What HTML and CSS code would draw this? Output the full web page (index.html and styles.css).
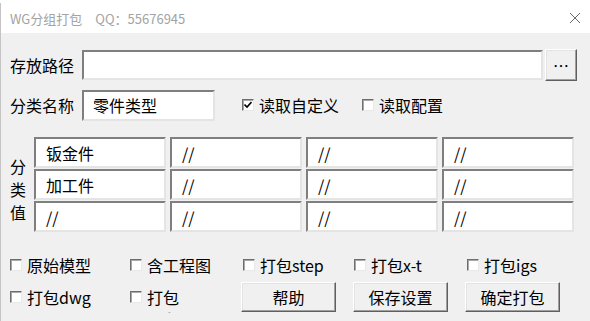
FILE: index.html
```html
<!DOCTYPE html>
<html lang="zh-CN">
<head>
    <meta charset="UTF-8">
    <title>WG分组打包</title>
    <link rel="stylesheet" href="styles.css">
</head>
<body>
    <div class="backdrop">
        <svg width="590" height="3" viewBox="0 0 590 3">
            <rect x="120" y="0" width="470" height="3" fill="#6f6f7b"/>
            <circle cx="413" cy="-3" r="7" fill="#2f8f86"/>
            <path d="M452 0 L458 3" stroke="#222" stroke-width="1"/>
            <rect x="585" y="0" width="1" height="3" fill="#d8d8d8"/>
        </svg>
    </div>

    <div class="window">
        <div class="titlebar">
            <span class="title">WG分组打包</span>
            <span class="qq">QQ：55676945</span>
            <span class="close">
                <svg width="12" height="12" viewBox="0 0 12 12">
                    <path d="M1 1 L11 11 M11 1 L1 11" stroke="#6a6a6a" stroke-width="1"/>
                </svg>
            </span>
        </div>

        <div class="content">
            <div class="row path-row">
                <label class="field-label">存放路径</label>
                <div class="textbox path-box"></div>
                <button class="btn browse">…</button>
            </div>

            <div class="row name-row">
                <label class="field-label">分类名称</label>
                <div class="textbox name-box">零件类型</div>
                <label class="check read-custom">
                    <span class="box">
                        <svg width="8" height="8" viewBox="0 0 8 8">
                            <path d="M0.5 3.5 L3 6 L7.5 1" stroke="#000" stroke-width="1.6" fill="none"/>
                        </svg>
                    </span>
                    读取自定义
                </label>
                <label class="check read-config"><span class="box"></span>读取配置</label>
            </div>

            <div class="values">
                <div class="values-label">分<br>类<br>值</div>
                <div class="value-grid">
                    <div class="textbox cell">钣金件</div>
                    <div class="textbox cell">//</div>
                    <div class="textbox cell">//</div>
                    <div class="textbox cell">//</div>
                    <div class="textbox cell">加工件</div>
                    <div class="textbox cell">//</div>
                    <div class="textbox cell">//</div>
                    <div class="textbox cell">//</div>
                    <div class="textbox cell">//</div>
                    <div class="textbox cell">//</div>
                    <div class="textbox cell">//</div>
                    <div class="textbox cell">//</div>
                </div>
            </div>

            <div class="options">
                <label class="check w120"><span class="box"></span>原始模型</label>
                <label class="check w113"><span class="box"></span>含工程图</label>
                <label class="check w111"><span class="box"></span>打包step</label>
                <label class="check w113"><span class="box"></span>打包x-t</label>
                <label class="check"><span class="box"></span>打包igs</label>
            </div>

            <div class="actions">
                <label class="check w120"><span class="box"></span>打包dwg</label>
                <label class="check clipped w111"><span class="box"></span><span class="clip-text">打包 dxf</span></label>
                <div class="buttons">
                    <button class="btn action">帮助</button>
                    <button class="btn action">保存设置</button>
                    <button class="btn action">确定打包</button>
                </div>
            </div>
        </div>
    </div>
</body>
</html>
```

FILE: styles.css
```css
html, body {
    margin: 0;
    padding: 0;
}

body {
    width: 590px;
    height: 321px;
    overflow: hidden;
    background-color: #ffffff;
    font-family: 'Noto Sans CJK SC', 'Noto Sans', sans-serif;
    color: #000;
}

.backdrop {
    height: 3px;
    line-height: 0;
}

.window {
    height: 318px;
    display: flex;
    flex-direction: column;
    border-left: 1px solid #c4c4c4;
    box-sizing: border-box;
}

/* Title bar */
.titlebar {
    height: 30px;
    display: flex;
    align-items: center;
    padding-left: 9px;
    background-color: #fff;
    font-size: 13px;
    color: #a3a3a3;
}

.qq {
    margin-left: 13px;
}

.close {
    margin-left: auto;
    margin-right: 9px;
    display: flex;
}

/* Main area */
.content {
    flex: 1;
    background-color: #f0f0f0;
    padding: 16px 0 0 9px;
    font-size: 16px;
}

.row {
    display: flex;
    align-items: center;
}

.field-label {
    width: 72px;
    line-height: 22px;
}

.textbox {
    box-sizing: border-box;
    background-color: #fff;
    border: 2px solid;
    border-color: #7f7f7f #e4e4e4 #e4e4e4 #7f7f7f;
    display: flex;
    align-items: center;
    padding-left: 9px;
    line-height: 20px;
}

.path-row {
    height: 32px;
}

.path-box {
    width: 461px;
    height: 30px;
}

.btn {
    box-sizing: border-box;
    background-color: #f0f0f0;
    border: 1px solid;
    border-color: #fff #5f5f5f #5f5f5f #fff;
    box-shadow: inset -1px -1px 0 #a0a0a0, inset 1px 1px 0 #e3e3e3;
    font-family: inherit;
    font-size: 16px;
    color: #000;
    padding: 0;
    cursor: pointer;
}

.browse {
    width: 32px;
    height: 32px;
    margin-left: 2px;
    line-height: 30px;
}

.name-row {
    margin-top: 8px;
    height: 32px;
}

.name-box {
    width: 133px;
    height: 31px;
}

/* Checkboxes */
.check {
    display: flex;
    align-items: center;
    line-height: 22px;
    white-space: nowrap;
}

.box {
    box-sizing: border-box;
    width: 12px;
    height: 12px;
    margin-right: 5px;
    background-color: #fff;
    border: 1px solid;
    border-color: #6e6e6e #e8e8e8 #e8e8e8 #6e6e6e;
    box-shadow: inset 1px 1px 0 #a8a8a8;
    display: flex;
    align-items: center;
    justify-content: center;
}

.read-custom {
    margin-left: 27px;
}

.read-config {
    margin-left: 23px;
}

/* Classification values */
.values {
    display: flex;
    align-items: center;
    margin-top: 16px;
}

.values-label {
    width: 24px;
    line-height: 23px;
    margin-top: 10px;
}

.value-grid {
    display: grid;
    grid-template-columns: repeat(4, 132px);
    grid-auto-rows: 31px;
    column-gap: 4px;
    row-gap: 1px;
}

.cell {
    padding-left: 10px;
}

/* Option rows */
.options {
    display: flex;
    align-items: center;
    margin-top: 23px;
    height: 20px;
}

.w120 { width: 120px; }
.w113 { width: 113px; }
.w111 { width: 111px; }

.actions {
    display: flex;
    align-items: center;
    margin-top: 7px;
    height: 30px;
}

.clipped {
    align-items: flex-start;
    white-space: normal;
    height: 27px;
    margin-top: 4px;
}

.clipped .box {
    margin-top: 5px;
}

.clip-text {
    width: 40px;
    height: 27px;
    overflow: hidden;
}

.buttons {
    display: flex;
    gap: 17px;
}

.action {
    width: 95px;
    height: 30px;
}
```
